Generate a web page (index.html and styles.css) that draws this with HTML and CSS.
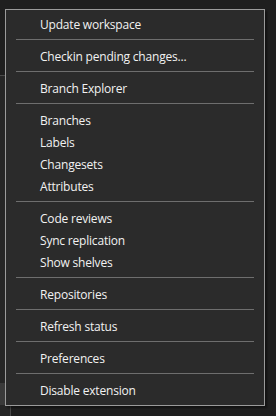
FILE: index.html
```html
<!DOCTYPE html>
<html>
<head>
<meta charset="utf-8">
<link rel="stylesheet" href="styles.css">
</head>
<body>
<div class="backdrop">
  <div class="side">
    <div class="side-top"></div>
    <div class="side-panel">
      <div class="side-fill"></div>
      <div class="side-row"></div>
      <div class="side-bottom"><div class="side-col"></div></div>
    </div>
  </div>
</div>
<div class="menu">
  <div class="item">Update workspace</div>
  <div class="sep"></div>
  <div class="item">Checkin pending changes...</div>
  <div class="sep"></div>
  <div class="item">Branch Explorer</div>
  <div class="sep"></div>
  <div class="item">Branches</div>
  <div class="item">Labels</div>
  <div class="item">Changesets</div>
  <div class="item">Attributes</div>
  <div class="sep"></div>
  <div class="item">Code reviews</div>
  <div class="item">Sync replication</div>
  <div class="item">Show shelves</div>
  <div class="sep"></div>
  <div class="item">Repositories</div>
  <div class="sep"></div>
  <div class="item">Refresh status</div>
  <div class="sep"></div>
  <div class="item">Preferences</div>
  <div class="sep"></div>
  <div class="item">Disable extension</div>
</div>
</body>
</html>
```
FILE: styles.css
```css
html, body {
  margin: 0;
  padding: 0;
  height: 100%;
  background: #1f1f1f;
  overflow: hidden;
}
.backdrop {
  height: 416px;
  display: flex;
}
.side {
  width: 120px;
  display: flex;
  flex-direction: column;
}
.side-top {
  height: 75px;
  background: #1f1f1f;
  border-bottom: 1px solid #4a4a4a;
}
.side-panel {
  flex: 1;
  display: flex;
  flex-direction: column;
  background: #262626;
}
.side-fill {
  height: 307px;
}
.side-row {
  height: 22px;
  background: #3a3a3a;
}
.side-bottom {
  flex: 1;
  display: flex;
  padding-left: 10px;
}
.side-col {
  flex: 1;
  background: #1f1f1f;
  border-left: 1px solid #4a4a4a;
}
.menu {
  position: absolute;
  left: 5px;
  top: 9px;
  width: 258px;
  padding: 3px 0 4px 0;
  background: #2b2b2b;
  border: 1px solid #9b9b9b;
  box-shadow: 2px 2px 2px rgba(0, 0, 0, 0.45);
  font-family: "Open Sans", "Noto Sans", sans-serif;
  font-size: 12px;
  letter-spacing: -0.2px;
  color: #f2f2f2;
}
.item {
  height: 22px;
  box-sizing: border-box;
  padding-top: 2px;
  line-height: 20px;
  padding-left: 34px;
  white-space: nowrap;
}
.sep {
  height: 1px;
  background: #6e6e6e;
  margin: 4px 10px 5px 10px;
}
```
